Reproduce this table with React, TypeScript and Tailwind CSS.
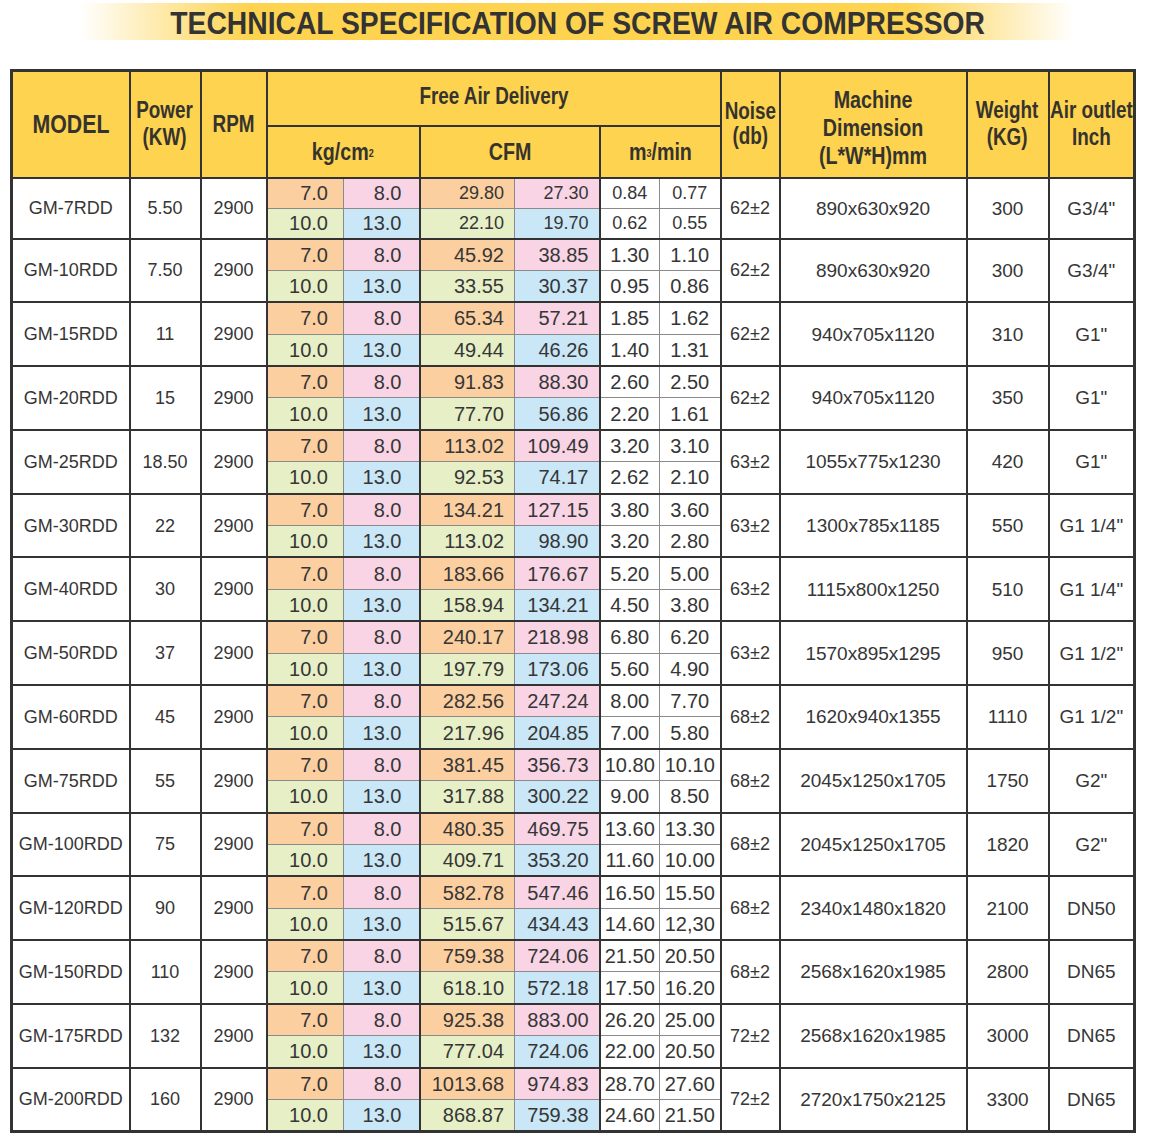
import type { ReactNode } from 'react';

type Spec = {
    model: string;
    power: string;
    cfm: [string, string, string, string];
    m3: [string, string, string, string];
    noise: string;
    dim: string;
    weight: string;
    outlet: string;
};

const SPECS: Spec[] = [
    { model: 'GM-7RDD', power: '5.50', cfm: ['29.80', '27.30', '22.10', '19.70'], m3: ['0.84', '0.77', '0.62', '0.55'], noise: '62±2', dim: '890x630x920', weight: '300', outlet: 'G3/4"' },
    { model: 'GM-10RDD', power: '7.50', cfm: ['45.92', '38.85', '33.55', '30.37'], m3: ['1.30', '1.10', '0.95', '0.86'], noise: '62±2', dim: '890x630x920', weight: '300', outlet: 'G3/4"' },
    { model: 'GM-15RDD', power: '11', cfm: ['65.34', '57.21', '49.44', '46.26'], m3: ['1.85', '1.62', '1.40', '1.31'], noise: '62±2', dim: '940x705x1120', weight: '310', outlet: 'G1"' },
    { model: 'GM-20RDD', power: '15', cfm: ['91.83', '88.30', '77.70', '56.86'], m3: ['2.60', '2.50', '2.20', '1.61'], noise: '62±2', dim: '940x705x1120', weight: '350', outlet: 'G1"' },
    { model: 'GM-25RDD', power: '18.50', cfm: ['113.02', '109.49', '92.53', '74.17'], m3: ['3.20', '3.10', '2.62', '2.10'], noise: '63±2', dim: '1055x775x1230', weight: '420', outlet: 'G1"' },
    { model: 'GM-30RDD', power: '22', cfm: ['134.21', '127.15', '113.02', '98.90'], m3: ['3.80', '3.60', '3.20', '2.80'], noise: '63±2', dim: '1300x785x1185', weight: '550', outlet: 'G1 1/4"' },
    { model: 'GM-40RDD', power: '30', cfm: ['183.66', '176.67', '158.94', '134.21'], m3: ['5.20', '5.00', '4.50', '3.80'], noise: '63±2', dim: '1115x800x1250', weight: '510', outlet: 'G1 1/4"' },
    { model: 'GM-50RDD', power: '37', cfm: ['240.17', '218.98', '197.79', '173.06'], m3: ['6.80', '6.20', '5.60', '4.90'], noise: '63±2', dim: '1570x895x1295', weight: '950', outlet: 'G1 1/2"' },
    { model: 'GM-60RDD', power: '45', cfm: ['282.56', '247.24', '217.96', '204.85'], m3: ['8.00', '7.70', '7.00', '5.80'], noise: '68±2', dim: '1620x940x1355', weight: '1110', outlet: 'G1 1/2"' },
    { model: 'GM-75RDD', power: '55', cfm: ['381.45', '356.73', '317.88', '300.22'], m3: ['10.80', '10.10', '9.00', '8.50'], noise: '68±2', dim: '2045x1250x1705', weight: '1750', outlet: 'G2"' },
    { model: 'GM-100RDD', power: '75', cfm: ['480.35', '469.75', '409.71', '353.20'], m3: ['13.60', '13.30', '11.60', '10.00'], noise: '68±2', dim: '2045x1250x1705', weight: '1820', outlet: 'G2"' },
    { model: 'GM-120RDD', power: '90', cfm: ['582.78', '547.46', '515.67', '434.43'], m3: ['16.50', '15.50', '14.60', '12,30'], noise: '68±2', dim: '2340x1480x1820', weight: '2100', outlet: 'DN50' },
    { model: 'GM-150RDD', power: '110', cfm: ['759.38', '724.06', '618.10', '572.18'], m3: ['21.50', '20.50', '17.50', '16.20'], noise: '68±2', dim: '2568x1620x1985', weight: '2800', outlet: 'DN65' },
    { model: 'GM-175RDD', power: '132', cfm: ['925.38', '883.00', '777.04', '724.06'], m3: ['26.20', '25.00', '22.00', '20.50'], noise: '72±2', dim: '2568x1620x1985', weight: '3000', outlet: 'DN65' },
    { model: 'GM-200RDD', power: '160', cfm: ['1013.68', '974.83', '868.87', '759.38'], m3: ['28.70', '27.60', '24.60', '21.50'], noise: '72±2', dim: '2720x1750x2125', weight: '3300', outlet: 'DN65' },
];

// condensed bold header text (no narrow font available, so squeeze Liberation Sans)
function Narrow({ children, className = '' }: { children: ReactNode; className?: string }) {
    return (
        <div className="flex justify-center">
            <span className={`inline-block whitespace-nowrap text-center scale-x-[0.82] ${className}`}>{children}</span>
        </div>
    );
}

const head = 'border-2 border-[#333] bg-[#fdd34f] p-0 align-middle font-bold text-[#36332e]';
const main = 'border-2 border-[#333] bg-white p-0 text-center align-middle leading-none';

function SubRow({ spec, top, first }: { spec: Spec; top: boolean; first: boolean }) {
    const tb = top
        ? 'border-t-2 border-t-[#333] border-b border-b-[#8a8a8a]'
        : 'border-t border-t-[#8a8a8a] border-b-2 border-b-[#333]';
    const cellBase = `${tb} border-r border-r-[#8a8a8a] p-0 leading-none`;
    const small = first ? 'text-[18px]' : 'text-[20px]';
    const i = top ? 0 : 2;
    return (
        <>
            <td className={`${cellBase} border-l-2 border-l-[#333] text-right pr-[15px] text-[20px] ${top ? 'bg-[#fbcfa0]' : 'bg-[#e6efc6]'}`}>
                {top ? '7.0' : '10.0'}
            </td>
            <td className={`${cellBase} border-l border-l-[#8a8a8a] text-right pr-[17px] text-[20px] ${top ? 'bg-[#f8d4e4]' : 'bg-[#c9e7f7]'}`}>
                {top ? '8.0' : '13.0'}
            </td>
            <td className={`${cellBase} border-l-2 border-l-[#333] text-right pr-[10px] ${small} ${top ? 'bg-[#fbcfa0]' : 'bg-[#e6efc6]'}`}>
                {spec.cfm[i]}
            </td>
            <td className={`${cellBase} border-l border-l-[#8a8a8a] text-right pr-[10px] ${small} ${top ? 'bg-[#f8d4e4]' : 'bg-[#c9e7f7]'}`}>
                {spec.cfm[i + 1]}
            </td>
            <td className={`${cellBase} border-l-2 border-l-[#333] text-center bg-white ${small}`}>{spec.m3[i]}</td>
            <td className={`${cellBase} border-l border-l-[#8a8a8a] text-center bg-white ${small}`}>{spec.m3[i + 1]}</td>
        </>
    );
}

export default function App() {
    return (
        <div className="w-[1155px] min-h-[1146px] bg-white pt-[3px] font-['Liberation_Sans',Arial,sans-serif] text-[#363636]">
            <div className="mx-[80px] flex h-[37px] items-center justify-center pt-[3px] bg-[linear-gradient(90deg,rgba(253,211,79,0)_0%,#fdd34f_17%,#fdd34f_83%,rgba(253,211,79,0)_100%)]">
                <span className="inline-block whitespace-nowrap text-[31px] font-bold leading-none text-[#333] scale-x-[0.912]">
                    TECHNICAL SPECIFICATION OF SCREW AIR COMPRESSOR
                </span>
            </div>

            <table className="ml-[10px] mt-[29px] w-[1123px] table-fixed border-collapse border-[3px] border-[#333]">
                <colgroup>
                    <col className="w-[118px]" />
                    <col className="w-[71px]" />
                    <col className="w-[66px]" />
                    <col className="w-[77px]" />
                    <col className="w-[76px]" />
                    <col className="w-[95px]" />
                    <col className="w-[85px]" />
                    <col className="w-[60px]" />
                    <col className="w-[61px]" />
                    <col className="w-[59px]" />
                    <col className="w-[187px]" />
                    <col className="w-[82px]" />
                    <col className="w-[86px]" />
                </colgroup>
                <thead>
                    <tr className="h-[55px]">
                        <th rowSpan={2} className={head}>
                            <Narrow className="text-[26px]">MODEL</Narrow>
                        </th>
                        <th rowSpan={2} className={head}>
                            <Narrow className="text-[23px] leading-[27px]">
                                Power
                                <br />
                                (KW)
                            </Narrow>
                        </th>
                        <th rowSpan={2} className={head}>
                            <Narrow className="text-[23px]">RPM</Narrow>
                        </th>
                        <th colSpan={6} className={`${head} pb-[4px]`}>
                            <Narrow className="text-[23px]">Free Air Delivery</Narrow>
                        </th>
                        <th rowSpan={2} className={head}>
                            <Narrow className="text-[23px] leading-[25px]">
                                Noise
                                <br />
                                (db)
                            </Narrow>
                        </th>
                        <th rowSpan={2} className={`${head} pt-[8px]`}>
                            <Narrow className="text-[24px] leading-[28px]">
                                Machine
                                <br />
                                Dimension
                                <br />
                                (L*W*H)mm
                            </Narrow>
                        </th>
                        <th rowSpan={2} className={head}>
                            <Narrow className="text-[23px] leading-[27px]">
                                Weight
                                <br />
                                (KG)
                            </Narrow>
                        </th>
                        <th rowSpan={2} className={head}>
                            <Narrow className="text-[23px] leading-[27px]">
                                Air outlet
                                <br />
                                Inch
                            </Narrow>
                        </th>
                    </tr>
                    <tr className="h-[52px]">
                        <th colSpan={2} className={head}>
                            <Narrow className="text-[24px]">
                                kg/cm<sup className="relative -top-[3px] text-[11px]">2</sup>
                            </Narrow>
                        </th>
                        <th colSpan={2} className={head}>
                            <Narrow className="text-[24px]">CFM</Narrow>
                        </th>
                        <th colSpan={2} className={head}>
                            <Narrow className="text-[24px]">
                                m<sup className="relative -top-[3px] text-[11px]">3</sup>/min
                            </Narrow>
                        </th>
                    </tr>
                </thead>
                <tbody>
                    {SPECS.map((s, idx) => {
                        const first = idx === 0;
                        const h = first ? 'h-[30.5px]' : 'h-[31.9px]';
                        return [
                            <tr key={s.model + '-a'} className={h}>
                                <td rowSpan={2} className={`${main} text-[18px]`}>{s.model}</td>
                                <td rowSpan={2} className={`${main} text-[18px]`}>{s.power}</td>
                                <td rowSpan={2} className={`${main} text-[18px]`}>2900</td>
                                <SubRow spec={s} top first={first} />
                                <td rowSpan={2} className={`${main} text-[18px]`}>{s.noise}</td>
                                <td rowSpan={2} className={`${main} text-[19px]`}>{s.dim}</td>
                                <td rowSpan={2} className={`${main} text-[19px]`}>{s.weight}</td>
                                <td rowSpan={2} className={`${main} text-[19px]`}>{s.outlet}</td>
                            </tr>,
                            <tr key={s.model + '-b'} className={h}>
                                <SubRow spec={s} top={false} first={first} />
                            </tr>,
                        ];
                    })}
                </tbody>
            </table>
        </div>
    );
}
